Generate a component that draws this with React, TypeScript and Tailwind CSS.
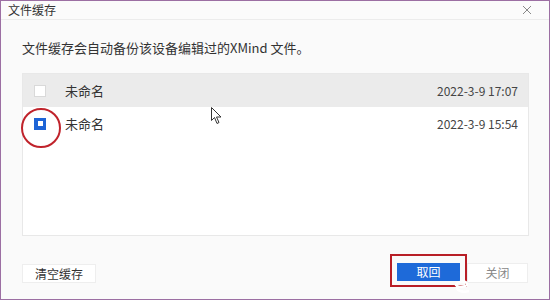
import React from 'react';

const files = [
  { name: '未命名', time: '2022-3-9 17:07', checked: false },
  { name: '未命名', time: '2022-3-9 15:54', checked: true },
];

const font = { fontFamily: '"Microsoft YaHei", "Noto Sans CJK SC", sans-serif' };

export default function App() {
  return (
    <div
      className="w-[550px] h-[300px] bg-[#fafafa] border border-[#9c6fa3] flex flex-col text-[#333] relative overflow-hidden"
      style={font}
    >
      {/* Title bar */}
      <div className="h-[19px] flex items-center justify-between px-[7px] border-b border-[#ececec] bg-[#fbfbfb] shrink-0">
        <span className="text-[12px] leading-none text-[#333]">文件缓存</span>
        <svg width="10" height="10" viewBox="0 0 10 10" className="mr-[10px]">
          <path d="M1 1 L9 9 M9 1 L1 9" stroke="#888" strokeWidth="1" />
        </svg>
      </div>

      <div className="flex-1 flex flex-col px-[21px]">
        <p className="text-[13px] leading-none mt-[21px] text-[#333]">
          文件缓存会自动备份该设备编辑过的XMind 文件。
        </p>

        {/* File list */}
        <div className="mt-[19px] h-[163px] bg-white border border-[#e8e8e8] mr-[-1px]">
          {files.map((f, i) => (
            <div
              key={i}
              className={`h-[33px] flex items-center pl-[11px] pr-[10px] ${i === 0 ? 'bg-[#ebebeb]' : 'bg-white'}`}
            >
              {f.checked ? (
                <div className="w-[12px] h-[12px] bg-[#1e64d6] flex items-center justify-center">
                  <div className="w-[5px] h-[5px] bg-white" />
                </div>
              ) : (
                <div className="w-[12px] h-[12px] bg-white border border-[#d9d9d9]" />
              )}
              <span className="ml-[19px] text-[13px] text-[#333]">{f.name}</span>
              <span className="ml-auto text-[12px] text-[#444]">{f.time}</span>
            </div>
          ))}
        </div>

        {/* Footer buttons */}
        <div className="flex items-start justify-between mt-[18px]">
          <button className="mt-[10px] w-[74px] h-[19px] bg-white text-[12px] text-[#333] border border-[#eeeeee] leading-none">
            清空缓存
          </button>
          <div className="flex items-center">
            <div className="border-2 border-[#b81e26] px-[5px] pt-[7px] pb-[4px]">
              <button className="block w-[63px] h-[18px] bg-[#1e6ad9] text-white text-[12px] leading-none">
                取回
              </button>
            </div>
            <button className="w-[61px] h-[20px] mt-[4px] bg-white text-[12px] text-[#888] border border-[#eeeeee] leading-none">
              关闭
            </button>
          </div>
        </div>
      </div>

      {/* Red annotation circle */}
      <div className="absolute left-[20px] top-[107px] w-[40px] h-[40px] rounded-full border-2 border-[#c0232b]" />

      {/* Mouse cursor */}
      <svg className="absolute left-[210px] top-[106px]" width="12" height="18" viewBox="0 0 12 18">
        <path
          d="M0.5 0.5 L0.5 13.5 L3.5 10.5 L6 16.5 L8 15.5 L5.5 10 L10 10 Z"
          fill="white"
          stroke="#333"
          strokeWidth="1"
        />
      </svg>

      {/* Watermark swirl */}
      <svg className="absolute left-[452px] top-[276px]" width="18" height="18" viewBox="0 0 18 18">
        <path d="M3 9 C3 4 13 3 14 7 C15 10 5 10 4 9 C3 13 8 16 16 14" fill="none" stroke="white" strokeWidth="2.5" />
      </svg>
    </div>
  );
}
